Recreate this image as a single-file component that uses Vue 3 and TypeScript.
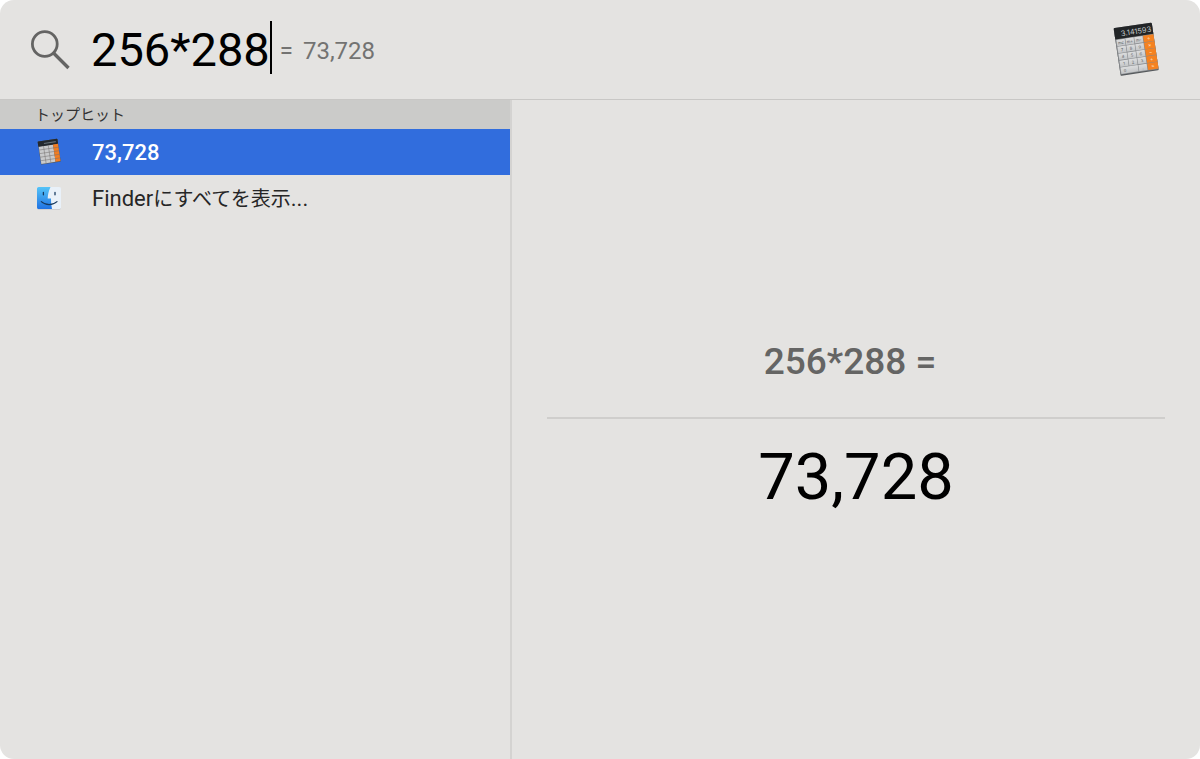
<script setup lang="ts">
import { computed, onMounted, ref } from 'vue'

const query = ref<string>('256*288')
const selected = ref<number>(0)
const field = ref<HTMLInputElement | null>(null)

const total = computed<string>(() => {
  const factors = query.value.split('*').map(Number)
  return factors.reduce((a, b) => a * b, 1).toLocaleString('en-US')
})

const keys = [0, 1, 2, 3, 4].flatMap((row) =>
  [0, 1, 2].map((col) => ({ row, col, x: 1 + col * 9, y: 12 + row * 7 }))
).filter((k) => !(k.row === 4 && k.col === 1))
const signs: string[] = ['÷', '×', '−', '+', '=']
const labels: string[][] = [['mc', 'm+', 'm-'], ['7', '8', '9'], ['4', '5', '6'], ['1', '2', '3'], ['0', '', '.']]

onMounted(() => field.value?.setSelectionRange(query.value.length, query.value.length))
</script>

<template>
  <main class="spotlight">
    <svg width="0" height="0" class="defs" aria-hidden="true">
      <defs>
        <linearGradient id="keyFill" x1="0" y1="0" x2="0" y2="1">
          <stop offset="0" stop-color="#dcddde" /><stop offset="1" stop-color="#c3c5c7" />
        </linearGradient>
        <linearGradient id="faceFill" x1="0" y1="0" x2="0" y2="1">
          <stop offset="0" stop-color="#55c4f8" /><stop offset="1" stop-color="#1f72e2" />
        </linearGradient>
        <symbol id="calculator" viewBox="0 0 50 58">
          <g transform="translate(1.6 7.2) rotate(-8.5)">
            <rect x="0" y="1" width="38.5" height="47.2" rx="1" fill="#55595c" />
            <rect x="0" y="0" width="38.5" height="47" rx="1" fill="#85888b" />
            <path d="M1 0H37.5Q38.5 0 38.5 1V11.4H0V1Q0 0 1 0Z" fill="#222527" />
            <text x="37" y="9" text-anchor="end" font-size="7.5" fill="#c4caca" class="glyph">3.141593</text>
            <g v-for="k in keys" :key="`${k.row}-${k.col}`">
              <rect :x="k.x" :y="k.y" :width="k.row === 4 && k.col === 0 ? 17.4 : 8.4" height="6.4" fill="url(#keyFill)" />
              <text :x="k.x + 4.2" :y="k.y + 4.8" text-anchor="middle" font-size="4" fill="#55585b" class="glyph">{{ labels[k.row][k.col] }}</text>
            </g>
            <g v-for="(s, i) in signs" :key="s">
              <rect x="28" :y="11.8 + i * 7" width="10.5" height="6.6" fill="#f58220" />
              <text x="33.2" :y="16.8 + i * 7" text-anchor="middle" font-size="5" fill="#ffe0c0" class="glyph">{{ s }}</text>
            </g>
          </g>
        </symbol>
        <symbol id="calculator-small" viewBox="0 0 28 28">
          <g transform="translate(2.6 3.6) rotate(-8.5)">
            <rect width="20" height="23.2" rx="0.6" fill="#54585f" />
            <rect x="0.4" y="5" width="14.4" height="17.6" fill="#c9cacb" />
            <rect width="20" height="5.2" rx="0.6" fill="#24292e" />
            <path d="M6 2.8H18" stroke="#657078" stroke-width="1.2" />
            <rect x="14.8" y="5.2" width="5" height="17.4" fill="#f27d22" />
            <path d="M0.4 8.6H19.8M0.4 12.2H19.8M0.4 15.8H19.8M0.4 19.4H19.8M5.2 5.2V22.6M10 5.2V22.6" stroke="#75716f" stroke-width="0.5" />
          </g>
        </symbol>
      </defs>
    </svg>

    <header class="bar">
      <svg class="lens" viewBox="0 0 40 40" aria-hidden="true">
        <circle cx="14.8" cy="14" r="12.4" fill="none" stroke="#646463" stroke-width="2.8" />
        <path d="M23.5 23 38.5 38" stroke="#646463" stroke-width="3.4" fill="none" />
      </svg>
      <label class="entry">
        <input ref="field" v-model="query" type="text" class="query" aria-label="Spotlight" spellcheck="false" />
        <span class="caret"></span>
      </label>
      <output class="inline-result"><span>=</span><span>{{ total }}</span></output>
      <svg class="app-icon" aria-hidden="true"><use href="#calculator" /></svg>
    </header>

    <div class="body">
      <nav class="results">
        <h2 class="heading">トップヒット</h2>
        <button type="button" class="row" :class="{ active: selected === 0 }" @click="selected = 0">
          <svg class="row-icon" aria-hidden="true"><use href="#calculator-small" /></svg>
          <span>{{ total }}</span>
        </button>
        <button type="button" class="row" :class="{ active: selected === 1 }" @click="selected = 1">
          <svg class="row-icon" viewBox="0 0 28 28" aria-hidden="true">
            <rect x="2.2" y="3.6" width="23.6" height="22" rx="1.6" fill="#b9bcc0" />
            <rect x="2" y="3" width="24" height="22" rx="1.6" fill="#e9f1f9" />
            <path d="M3.6 3H15.5C13.6 7 12.8 11 12.7 14.6H16C15.9 18 16.2 21.5 17 25H3.6Q2 25 2 23.4V4.6Q2 3 3.6 3Z" fill="url(#faceFill)" />
            <path d="M8.4 8.5V10.8M20 8.5V10.8" stroke="#16395f" stroke-width="1.3" stroke-linecap="round" />
            <path d="M6.3 17.6C10.5 21.5 17.8 21.5 22 17.6" fill="none" stroke="#16395f" stroke-width="1.2" stroke-linecap="round" />
          </svg>
          <span>Finder<span class="kana">にすべてを表示</span>...</span>
        </button>
      </nav>
      <section class="preview">
        <p class="expression">{{ query }} =</p>
        <p class="answer">{{ total }}</p>
      </section>
    </div>
  </main>
</template>

<style>
html, body { background: #fff; }
</style>

<style scoped>
.spotlight {
  display: flex;
  flex-direction: column;
  min-height: 100vh;
  box-sizing: border-box;
  overflow: hidden;
  border-radius: 14px;
  background: #e4e3e1;
  color: #000;
  font-family: Roboto, "Noto Sans CJK JP", sans-serif;
}
.defs { position: absolute; }
.glyph { font-family: Inter, sans-serif; }
.bar {
  display: flex;
  align-items: center;
  height: 99px;
  padding: 0 38px 0 30px;
  border-bottom: 1px solid #c8c7c5;
}
.lens { width: 40px; height: 40px; flex: none; }
.entry { display: flex; align-items: center; margin-left: 21px; }
.query {
  field-sizing: content;
  padding: 0;
  border: 0;
  outline: 0;
  background: transparent;
  color: #000;
  font: 400 47px/56px Roboto, sans-serif;
}
.caret { width: 2px; height: 53px; margin-bottom: 4px; background: #000; }
.inline-result {
  display: flex;
  gap: 10px;
  margin-left: 8px;
  padding-top: 2px;
  color: #737372;
  font-size: 24px;
}
.app-icon { width: 50px; height: 58px; margin-left: auto; flex: none; }
.body { display: flex; flex: 1; }
.results {
  flex: 0 0 42.5%;
  border-right: 2px solid #d4d3d1;
}
.heading {
  margin: 0;
  padding: 2px 0 0 35px;
  background: #cbcbc9;
  color: #333;
  font-size: 15px;
  font-weight: 400;
  line-height: 27px;
}
.row {
  display: flex;
  align-items: center;
  gap: 29px;
  width: 100%;
  height: 46px;
  padding: 0 35px;
  border: 0;
  background: transparent;
  color: #262626;
  font: 400 22px/44px Roboto, "Noto Sans CJK JP", sans-serif;
  text-align: left;
}
.row > span { padding-top: 2px; }
.row.active { background: #316ddd; color: #fff; font-weight: 500; }
.row-icon { width: 28px; height: 28px; flex: none; }
.kana { font-size: 20px; }
.preview {
  flex: 1;
  display: flex;
  flex-direction: column;
  justify-content: center;
  padding: 0 35px 4px;
  text-align: center;
}
.expression {
  margin: 0;
  padding: 0 12px 32px 0;
  border-bottom: 2px solid #cfcecc;
  color: #656564;
  font-size: 37px;
  font-weight: 500;
  line-height: 46px;
}
.answer { margin: 0; padding-top: 18px; font-size: 65px; line-height: 80px; }
</style>
